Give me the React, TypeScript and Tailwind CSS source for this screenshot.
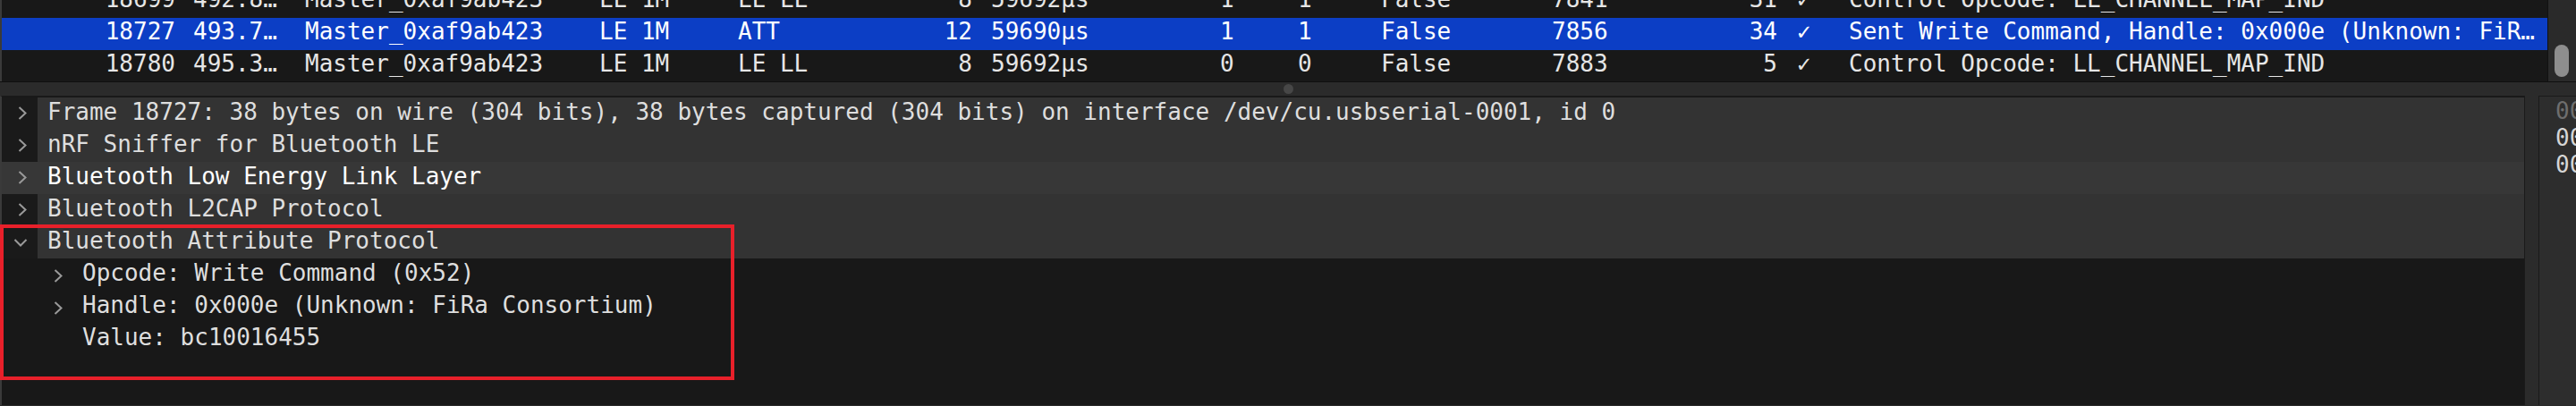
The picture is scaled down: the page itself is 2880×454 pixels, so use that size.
import React from 'react';

type Packet = {
  no: string;
  time: string;
  src: string;
  phy: string;
  proto: string;
  len: string;
  delta: string;
  sn: string;
  nesn: string;
  more: string;
  evt: string;
  crc: string;
  ok: string;
  info: string;
};

const packets: Packet[] = [
  {
    no: '18699',
    time: '492.8…',
    src: 'Master_0xaf9ab423',
    phy: 'LE 1M',
    proto: 'LE LL',
    len: '8',
    delta: '59692µs',
    sn: '1',
    nesn: '1',
    more: 'False',
    evt: '7841',
    crc: '31',
    ok: '✓',
    info: 'Control Opcode: LL_CHANNEL_MAP_IND',
  },
  {
    no: '18727',
    time: '493.7…',
    src: 'Master_0xaf9ab423',
    phy: 'LE 1M',
    proto: 'ATT',
    len: '12',
    delta: '59690µs',
    sn: '1',
    nesn: '1',
    more: 'False',
    evt: '7856',
    crc: '34',
    ok: '✓',
    info: 'Sent Write Command, Handle: 0x000e (Unknown: FiR…',
  },
  {
    no: '18780',
    time: '495.3…',
    src: 'Master_0xaf9ab423',
    phy: 'LE 1M',
    proto: 'LE LL',
    len: '8',
    delta: '59692µs',
    sn: '0',
    nesn: '0',
    more: 'False',
    evt: '7883',
    crc: '5',
    ok: '✓',
    info: 'Control Opcode: LL_CHANNEL_MAP_IND',
  },
];

const Chevron = ({ open = false }: { open?: boolean }) =>
  open ? (
    <svg width="16" height="9" viewBox="0 0 16 9" fill="none">
      <polyline points="1.5,1 8,7.5 14.5,1" stroke="#9a9a9a" strokeWidth="2" />
    </svg>
  ) : (
    <svg width="10" height="15" viewBox="0 0 10 15" fill="none">
      <polyline points="1.5,1 8.5,7.5 1.5,14" stroke="#9a9a9a" strokeWidth="2" />
    </svg>
  );

const PacketRow = ({ p, selected }: { p: Packet; selected?: boolean }) => (
  <div
    className={
      selected
        ? 'flex h-[36px] leading-[30px] whitespace-nowrap bg-[#0c3ec5] text-white'
        : 'flex h-[36px] leading-[30px] whitespace-nowrap text-[#e6e6e6]'
    }
  >
    <div className="w-[204px] shrink-0 pr-[10px] text-right">{p.no}</div>
    <div className="w-[125px] shrink-0 pl-[10px]">{p.time}</div>
    <div className="w-[329px] shrink-0 pl-[10px]">{p.src}</div>
    <div className="w-[155px] shrink-0 pl-[10px]">{p.phy}</div>
    <div className="w-[185px] shrink-0 pl-[10px]">{p.proto}</div>
    <div className="w-[97px] shrink-0 pr-[10px] text-right">{p.len}</div>
    <div className="w-[257px] shrink-0 pl-[11px]">{p.delta}</div>
    <div className="w-[87px] shrink-0 pl-[10px]">{p.sn}</div>
    <div className="w-[93px] shrink-0 pl-[10px]">{p.nesn}</div>
    <div className="w-[191px] shrink-0 pl-[10px]">{p.more}</div>
    <div className="w-[175px] shrink-0 pl-[10px]">{p.evt}</div>
    <div className="w-[97px] shrink-0 pr-[10px] text-right">{p.crc}</div>
    <div className="w-[60px] shrink-0 pl-[12px]">{p.ok}</div>
    <div className="flex-1 overflow-hidden pl-[10px]">{p.info}</div>
  </div>
);

const TreeRow = ({
  label,
  open,
  hover,
}: {
  label: string;
  open?: boolean;
  hover?: boolean;
}) => (
  <div className="flex h-[36px]">
    <div
      className={
        hover
          ? 'w-[40px] shrink-0 bg-[#373737] pl-[18px] pt-[10px]'
          : open
            ? 'w-[40px] shrink-0 bg-[#1a1a1a] pl-[13px] pt-[14px]'
            : 'w-[40px] shrink-0 bg-[#1a1a1a] pl-[18px] pt-[10px]'
      }
    >
      <Chevron open={open} />
    </div>
    <div
      className={
        hover
          ? 'flex-1 bg-[#373737] pl-[11px] pt-[1px] leading-[30px] text-white'
          : 'flex-1 bg-[#333333] pl-[11px] pt-[1px] leading-[30px] text-[#dedede]'
      }
    >
      {label}
    </div>
  </div>
);

const ChildRow = ({ label, leaf }: { label: string; leaf?: boolean }) => (
  <div className="flex h-[36px] bg-[#181818]">
    <div className="w-[82px] shrink-0 pl-[58px] pt-[12px]">{!leaf && <Chevron />}</div>
    <div className="pl-[8px] pt-[1px] leading-[30px] text-[#dedede]">{label}</div>
  </div>
);

export default function App() {
  return (
    <div className="relative w-[2880px] h-[454px] overflow-hidden bg-[#2b2b2b] font-['DejaVu_Sans_Mono',monospace] text-[26px]">
      {/* packet list */}
      <div className="flex h-[92px] border-b border-[#0f0f0f]">
        <div className="w-[2848px] shrink-0 overflow-hidden border-l-2 border-[#3a3a3a] bg-[#181818]">
          <div className="-mt-[16px]">
            {packets.map((p, i) => (
              <PacketRow key={p.no} p={p} selected={i === 1} />
            ))}
          </div>
        </div>
        <div className="flex-1 border-l border-[#111111] bg-[#2a2a2a] pl-[7px] pt-[50px]">
          <div className="h-[36px] w-[16px] rounded-full bg-[#8e8e8e]" />
        </div>
      </div>

      {/* splitter */}
      <div className="flex h-[15px] items-center justify-center">
        <div className="h-[11px] w-[11px] rounded-full bg-[#474747]" />
      </div>

      {/* details + bytes */}
      <div className="flex h-[346px]">
        <div className="w-[2823px] shrink-0 border-t border-r border-l-2 border-[#1a1a1a] border-l-[#3a3a3a] bg-[#181818] pt-[1px] text-[#dedede]">
          <TreeRow label="Frame 18727: 38 bytes on wire (304 bits), 38 bytes captured (304 bits) on interface /dev/cu.usbserial-0001, id 0" />
          <TreeRow label="nRF Sniffer for Bluetooth LE" />
          <TreeRow label="Bluetooth Low Energy Link Layer" hover />
          <TreeRow label="Bluetooth L2CAP Protocol" />
          <TreeRow label="Bluetooth Attribute Protocol" open />
          <ChildRow label="Opcode: Write Command (0x52)" />
          <ChildRow label="Handle: 0x000e (Unknown: FiRa Consortium)" />
          <ChildRow label="Value: bc10016455" leaf />
        </div>
        <div className="w-[15px] shrink-0" />
        <div className="flex-1 overflow-hidden whitespace-nowrap border-t border-l border-[#1a1a1a] bg-[#2d2d2d] pl-[18px] pt-[1px] leading-[30px]">
          <div className="text-[#6e6e6e]">0000</div>
          <div className="text-[#d6d6d6]">0000</div>
          <div className="text-[#d6d6d6]">0000</div>
        </div>
      </div>

      {/* annotation */}
      <div className="absolute left-0 top-[251px] h-[174px] w-[821px] border-[4px] border-[#e8202a]" />
    </div>
  );
}
